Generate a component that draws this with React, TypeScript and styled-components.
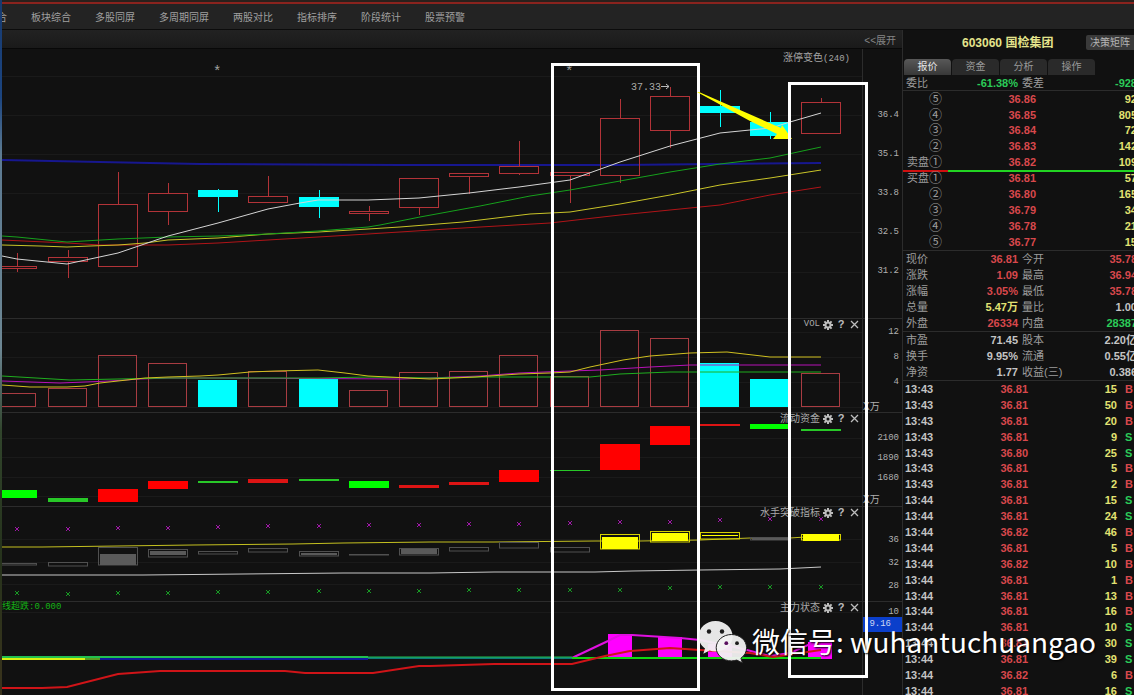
import React from 'react';
import styled, { createGlobalStyle, css } from 'styled-components';

const UI_FONT = '"Liberation Sans", "Noto Sans CJK SC", sans-serif';
const MONO_FONT = '"Liberation Mono", "Noto Sans CJK SC", monospace';

const tone = {
  up: '#d8484c',
  down: '#2bcb58',
  volume: '#e2e272',
  plain: '#c4c4c4',
  label: '#9c9c9c',
} as const;
type Tone = keyof typeof tone;

const GlobalStyle = createGlobalStyle`
  * { box-sizing: border-box; }
  body { margin: 0; background: #111; color: #aaa; font-family: ${UI_FONT}; font-size: 11px; }
  button { font: inherit; color: inherit; border: 0; background: none; padding: 0; }
  a { color: inherit; text-decoration: none; }
`;

const Shell = styled.div`
  display: grid;
  grid-template-columns: 2px minmax(0, 1fr);
  height: 100vh;
  overflow: hidden;
`;

const DesktopEdge = styled.div`
  background: linear-gradient(#173a70 0%, #1c4580 14%, #5c7a92 22%, #6d8794 50%, #31452c 62%, #26331c 80%, #3a331c 100%);
`;

const Terminal = styled.div`
  display: flex;
  flex-direction: column;
  min-width: 0;
  overflow: hidden;
`;

const TopNav = styled.nav`
  flex: none;
  height: 30px;
  background: #232323;
  border-top: 2px solid #2a201c;
  border-bottom: 1px solid #0c0c0c;
`;

const AlertStripe = styled.div`
  height: 2px;
  background: #8a231e;
`;

const NavList = styled.ul`
  display: flex;
  gap: 24px;
  margin: 0 0 0 -5px;
  padding: 0;
  list-style: none;
  font-size: 10px;
  line-height: 27px;
  white-space: nowrap;
  color: #a0a0a0;
`;

const Workspace = styled.div`
  flex: 1;
  display: grid;
  grid-template-columns: minmax(0, 1fr) 232px;
  min-height: 0;
`;

const ChartColumn = styled.main`
  position: relative;
  min-width: 0;
`;

const SubBar = styled.div`
  display: flex;
  justify-content: flex-end;
  align-items: center;
  height: 19px;
  padding-right: 6px;
  background: linear-gradient(#222, #1a1a1a);
  border-bottom: 1px solid #080808;
  color: #858585;
  font-size: 10px;
`;

const Pane = styled.section<{ $height: number }>`
  display: grid;
  grid-template-columns: minmax(0, 1fr) 40px;
  grid-template-rows: minmax(0, 1fr);
  height: ${(p) => p.$height}px;
  border-bottom: 1px solid #2c2c2c;
  &:last-of-type { border-bottom: 0; }
`;

const Plot = styled.div`
  position: relative;
  min-width: 0;
  svg.plot { display: block; width: 100%; height: 100%; }
`;

const PaneTitle = styled.header`
  position: absolute;
  top: 0;
  right: 3px;
  display: flex;
  align-items: center;
  height: 11px;
  gap: 3px;
  font-size: 10px;
  line-height: 11px;
  color: #aaa;
  white-space: nowrap;
`;

const TitleText = styled.span<{ $latin?: boolean }>`
  ${(p) => p.$latin && css`
    font-family: ${MONO_FONT};
    font-size: 9px;
  `}
`;

const PaneCaption = styled.div`
  position: absolute;
  top: 3px;
  right: 12px;
  font-size: 10px;
  line-height: 11px;
  color: #a4a4a4;
  span { font-family: ${MONO_FONT}; font-size: 9px; }
`;

const ToolButton = styled.button`
  display: grid;
  place-items: center;
  width: 10px;
  height: 11px;
  color: #bdbdbd;
  font-size: 11px;
  font-weight: bold;
  line-height: 11px;
`;

const Axis = styled.div<{ $pad?: number; $step: number }>`
  border-left: 1px solid #2c2c2c;
  padding: ${(p) => p.$pad ?? 0}px 3px 0 0;
  text-align: right;
  font-family: ${MONO_FONT};
  font-size: 9px;
  line-height: ${(p) => p.$step}px;
  color: #b0b0b0;
`;

const AxisUnit = styled.div`
  padding-right: 20px;
  font-family: ${UI_FONT};
  font-size: 10px;
  line-height: 24px;
  white-space: nowrap;
`;

const AxisCursor = styled.div`
  margin-right: -3px;
  height: 15px;
  padding-right: 11px;
  background: #0b3fcb;
  color: #cdd8f4;
  line-height: 15px;
`;

const SignalLabel = styled.div`
  position: absolute;
  top: 0;
  left: 0;
  font-family: ${MONO_FONT};
  font-size: 9px;
  line-height: 11px;
  color: #14b414;
`;

const Frame = styled.div<{ $x: number; $y: number; $w: number; $h: number }>`
  position: absolute;
  left: ${(p) => p.$x}px;
  top: ${(p) => p.$y}px;
  width: ${(p) => p.$w}px;
  height: ${(p) => p.$h}px;
  border: 3px solid #fff;
`;

const ArrowMark = styled.svg`
  position: absolute;
  left: 693px;
  top: 60px;
`;

const Watermark = styled.div`
  position: absolute;
  left: 695px;
  top: 589px;
  z-index: 2;
  display: flex;
  align-items: flex-start;
  gap: 3px;
  white-space: nowrap;
  font-family: "Noto Sans CJK SC", sans-serif;
  font-size: 28px;
  line-height: 44px;
  color: #fff;
  text-shadow: 1px 1px 2px #000;
`;

const QuotePanel = styled.aside`
  border-left: 1px solid #2c2c2c;
  overflow: hidden;
`;

const QuoteHead = styled.div`
  display: flex;
  align-items: center;
  justify-content: space-between;
  height: 29px;
  padding: 0 0 4px 59px;
  h1 {
    margin: 0;
    font-size: 12px;
    line-height: 16px;
    color: #e4e48c;
    white-space: nowrap;
  }
`;

const MatrixButton = styled.button`
  width: 48px;
  height: 15px;
  border-radius: 2px 0 0 2px;
  background: #3a3a3a;
  color: #b4b4b4;
  font-size: 10px;
  line-height: 15px;
  white-space: nowrap;
`;

const Tabs = styled.div`
  display: flex;
  gap: 1px;
  padding-left: 1px;
`;

const Tab = styled.button<{ $active?: boolean }>`
  width: 47px;
  height: 16px;
  border-radius: 4px 4px 0 0;
  font-size: 10px;
  line-height: 16px;
  background: #2a2a2a;
  color: #9a9a9a;
  ${(p) => p.$active && css`
    background: linear-gradient(#585858, #383838);
    color: #e8e8e8;
  `}
`;

const Quotes = styled.table<{ $height: number; $ruled?: boolean }>`
  width: 234px;
  height: ${(p) => p.$height}px;
  table-layout: fixed;
  border-collapse: separate;
  border-spacing: 0;
  border-bottom: ${(p) => (p.$ruled ? '1px solid #2c2c2c' : '0')};
  line-height: 12px;
  white-space: nowrap;
`;

const Value = styled.td<{ $tone: Tone }>`
  padding: 0;
  text-align: right;
  font-weight: bold;
  color: ${(p) => tone[p.$tone]};
`;

const Label = styled.th<{ $inset?: number }>`
  padding: 0 0 0 ${(p) => p.$inset ?? 3}px;
  text-align: left;
  font-weight: normal;
  color: ${tone.label};
`;

const Level = styled(Label)`
  padding: 0;
  text-align: right;
  span { font-size: 13px; }
`;

const Time = styled(Value)`
  padding-left: 2px;
  text-align: left;
`;

const Side = styled(Value)`
  padding-left: 8px;
  text-align: left;
`;

const Balance = styled.div`
  height: 2px;
  margin: 0 0 -2px;
  background: linear-gradient(90deg, #d01010 45px, #22d422 45px);
`;

/* ---------- chart data ---------- */

const STEP = 50.2;
const centre = (i: number) => Math.round(17.3 + i * STEP);
const barLeft = (i: number) => centre(i) - 20;

type Candle = [top: number, bottom: number, high: number, low: number, falling?: boolean];
const candles: Candle[] = [
  [266, 269, 253, 272], [257, 262, 250, 278], [204, 267, 172, 267], [193, 212, 183, 225],
  [190, 197, 189, 212, true], [196, 203, 176, 203], [197, 207, 190, 218, true], [211, 214, 206, 221],
  [178, 208, 178, 215], [173, 177, 173, 194], [166, 174, 141, 175], [172, 176, 172, 203],
  [118, 176, 99, 183], [96, 131, 87, 148], [106, 113, 90, 127, true], [122, 136, 112, 139, true],
  [102, 134, 98, 134],
];

const volumes = [393, 388, 355, 363, 380, 371, 379, 390, 372, 371, 355, 376, 330, 338, 363, 379, 373];

const funds: [number, number, boolean][] = [
  [490, 498, false], [498, 502, false], [489, 502, true], [481, 489, true], [481, 483, false],
  [479, 483, true], [479, 481, false], [481, 488, false], [485, 488, true], [482, 485, true],
  [470, 482, true], [470, 471, false], [444, 470, true], [426, 445, true], [424, 426, true],
  [424, 429, false], [429, 431, false],
];

const upperMarks = [529, 529, 528, 528, 527, 526, 526, 525, 525, 524, 524, 523, 522, 522, 520, 519, 519];
const lowerMarks = [594, 595, 594, 594, 593, 593, 592, 592, 592, 591, 591, 591, 591, 589, 588, 588, 588];

type Breakout = { box: [number, number]; fill?: [number, number]; hot?: boolean };
const breakouts: Breakout[] = [
  { box: [563, 565] }, { box: [562, 566] }, { box: [547, 565], fill: [554, 565] },
  { box: [549, 557], fill: [551, 555] }, { box: [551, 554] }, { box: [548, 552] },
  { box: [551, 556], fill: [553, 555] }, { box: [554, 555] }, { box: [548, 555], fill: [549, 554] },
  { box: [547, 551] }, { box: [542, 548] }, { box: [547, 552] },
  { box: [534, 549], fill: [537, 549], hot: true }, { box: [531, 542], fill: [533, 541], hot: true },
  { box: [532, 539], fill: [535, 536], hot: true }, { box: [537, 540], fill: [538, 540] },
  { box: [534, 540], fill: [534, 541], hot: true },
];

const Line = ({ pts, color, width = 1 }: { pts: string; color: string; width?: number }) => (
  <polyline points={pts} fill="none" stroke={color} strokeWidth={width} />
);

const Grid = ({ rows }: { rows: number[] }) => (
  <g fill="#1a1a1a">
    {rows.map((y) => <rect key={y} x={2} y={y} width={860} height={1} />)}
  </g>
);

const PlotSvg = ({ top, height, label, children }: { top: number; height: number; label: string; children: React.ReactNode }) => (
  <svg className="plot" role="img" aria-label={label} viewBox={`2 ${top} 860 ${height}`} preserveAspectRatio="none">
    {children}
  </svg>
);

const GearIcon = () => (
  <svg width="10" height="10" viewBox="0 0 10 10" aria-hidden="true">
    <g stroke="currentColor" strokeWidth="2">
      <path d="M5 0v10M0 5h10M1.4 1.4l7.2 7.2M8.6 1.4L1.4 8.6" />
    </g>
    <circle cx="5" cy="5" r="3.5" fill="currentColor" />
    <circle cx="5" cy="5" r="1.5" fill="#111" />
  </svg>
);

const CloseIcon = () => (
  <svg width="9" height="9" viewBox="0 0 9 9" aria-hidden="true">
    <path d="M1 1l7 7M8 1L1 8" stroke="currentColor" strokeWidth="1.3" />
  </svg>
);

const PaneTools = ({ name, latin }: { name: string; latin?: boolean }) => (
  <PaneTitle>
    <TitleText $latin={latin}>{name}</TitleText>
    <ToolButton aria-label={`${name} 设置`}><GearIcon /></ToolButton>
    <ToolButton aria-label={`${name} 帮助`}>?</ToolButton>
    <ToolButton aria-label={`${name} 关闭`}><CloseIcon /></ToolButton>
  </PaneTitle>
);

const PricePane = () => (
  <Pane $height={270}>
    <Plot>
      <PlotSvg top={49} height={269} label="K线">
        <Grid rows={[76, 115, 154, 193, 232, 272]} />
        <Line color="#17178f" width={2} pts="2,160 100,162 200,164 400,165 620,165 821,163" />
        {candles.map(([top, bottom, high, low, falling], i) => {
          const x = centre(i);
          const color = falling ? '#00ffff' : '#b23338';
          return (
            <g key={i} fill="none" stroke={color}>
              <path d={`M${x + 0.5} ${high}V${top}M${x + 0.5} ${bottom}V${low}`} />
              <rect x={barLeft(i) + 0.5} y={top + 0.5} width={39} height={bottom - top - 1} fill={falling ? color : 'none'} />
            </g>
          );
        })}
        <Line color="#b01418" pts="2,240 67,243 100,245 168,245 218,243 268,240 318,237 368,234 463,228 550,223 620,215 670,210 720,205 770,195 821,187" />
        <Line color="#c9c428" pts="2,245 40,246 67,247 90,246 118,245 145,243 168,240 218,238 268,234 318,232 368,229 400,227 463,222 530,214 570,212 620,204 670,195 720,185 770,178 821,170" />
        <Line color="#16a01c" pts="2,236 17,237 67,242 118,239 168,237 218,236 268,234 318,231 368,227 380,225 420,217 480,206 530,196 570,190 620,181 670,172 720,164 770,158 821,147" />
        <Line color="#d4d4d4" pts="2,256 17,259 67,264 118,253 168,236 218,223 268,209 300,203 318,200 368,200 419,198 469,193 519,187 570,180 620,162 670,146 720,133 750,130 771,128 790,122 821,113" />
        <g fill="#a4a4a4" fontFamily="Liberation Mono" fontSize="14">
          <text x="213" y="76">*</text>
          <text x="565" y="76">*</text>
        </g>
        <text x="631" y="90" fill="#aaa" fontFamily="Liberation Mono" fontSize="10">37.33</text>
        <path d="M661 86.5h8M666 84l3 2.5l-3 2.5" fill="none" stroke="#bbb" />
      </PlotSvg>
      <PaneCaption>涨停变色<span>(240)</span></PaneCaption>
    </Plot>
    <Axis $pad={47} $step={39}>
      {['36.4', '35.1', '33.8', '32.5', '31.2'].map((v) => <div key={v}>{v}</div>)}
    </Axis>
  </Pane>
);

const VolumePane = () => (
  <Pane $height={94}>
    <Plot>
      <PlotSvg top={319} height={93} label="成交量">
        <Grid rows={[332, 357, 382, 407]} />
        {volumes.map((top, i) => {
          const falling = candles[i][4];
          return (
            <rect key={i} x={barLeft(i) + 0.5} y={top + 0.5} width={38} height={406 - top}
              fill={falling ? '#00ffff' : 'none'} stroke={falling ? '#00ffff' : '#a83c42'} />
          );
        })}
        <Line color="#b712b7" pts="2,381 60,383 110,381 140,379 168,378 218,378 400,379 430,378 480,376 519,373 570,371 600,370 650,367 690,365 821,365" />
        <Line color="#1fae1f" pts="2,376 70,380 118,379 168,378 318,378 368,377 430,378 480,377 590,377 620,374 670,372 821,372" />
        <Line color="#d0c020" pts="2,385 30,387 67,387 85,386 100,383 118,381 145,378 168,377 200,376 218,375 250,372 275,371 318,370 345,373 368,376 430,379 475,377 519,374 550,373 570,372 590,367 623,360 650,356 690,353 727,352 770,357 821,357" />
      </PlotSvg>
      <PaneTools name="VOL" latin />
    </Plot>
    <Axis $pad={1} $step={25}>
      <div>12</div><div>8</div><div>4</div>
      <AxisUnit>X万</AxisUnit>
    </Axis>
  </Pane>
);

const FundPane = () => (
  <Pane $height={94}>
    <Plot>
      <PlotSvg top={413} height={93} label="流动资金">
        <Grid rows={[438, 457, 477, 496]} />
        {funds.map(([top, bottom, rising], i) => (
          <rect key={i} x={barLeft(i)} y={top} width={40} height={bottom - top}
            fill={bottom - top < 5 ? (rising ? '#dd1414' : '#28c828') : rising ? '#ff0000' : '#00ff00'} />
        ))}
      </PlotSvg>
      <PaneTools name="流动资金" />
    </Plot>
    <Axis $pad={15} $step={20}>
      <div>2100</div><div>1890</div><div>1680</div>
      <AxisUnit>X万</AxisUnit>
    </Axis>
  </Pane>
);

const cross = (x: number, y: number) => `M${x - 2} ${y - 2}l4 4m0 -4l-4 4`;

const BreakoutPane = () => (
  <Pane $height={95}>
    <Plot>
      <PlotSvg top={507} height={94} label="水手突破指标">
        <Grid rows={[539, 562, 584]} />
        <path d={upperMarks.map((y, i) => cross(centre(i), y)).join('')} stroke="#a018a8" fill="none" />
        <path d={lowerMarks.map((y, i) => cross(centre(i), y - 1)).join('')} stroke="#189a24" fill="none" />
        <Line color="#c4c020" pts="2,547 42,547 193,545 293,544 343,543 430,542 494,542 595,541 640,541 700,540 750,538 790,538 821,536" />
        {breakouts.map(({ box, fill, hot }, i) => (
          <g key={i}>
            <rect x={barLeft(i) + 0.5} y={box[0] + 0.5} width={39} height={box[1] - box[0] - 0.5}
              fill="none" stroke={hot ? '#d6d200' : '#505050'} />
            {fill && <rect x={barLeft(i) + 2} y={fill[0]} width={36} height={fill[1] - fill[0]} fill={hot ? '#ffff00' : '#5a5a5a'} />}
          </g>
        ))}
        <Line color="#c8c8c8" pts="2,575 143,575 243,574 343,573 430,573 494,572 595,572 632,571 700,570 780,569 821,567" />
      </PlotSvg>
      <PaneTools name="水手突破指标" />
    </Plot>
    <Axis $pad={22} $step={23}>
      <div>36</div><div>32</div><div>28</div>
    </Axis>
  </Pane>
);

const StatePane = () => (
  <Pane $height={93}>
    <Plot>
      <PlotSvg top={602} height={93} label="主力状态">
        <Grid rows={[612]} />
        <g fill="#ff00ff">
          <rect x={608} y={634} width={24} height={24} />
          <rect x={658} y={637} width={24} height={21} />
          <rect x={708} y={644} width={24} height={14} />
          <rect x={808} y={642} width={24} height={17} />
        </g>
        <Line color="#e010e0" width={2} pts="572,658 608,641 620,635 632,635 680,638 700,640 730,646 747,650 770,656 790,653 808,645 821,643" />
        <Line color="#10189c" width={2} pts="100,659 368,659" />
        <Line color="#0c7a78" width={2} pts="368,658 572,658" />
        <Line color="#22c050" width={2} pts="2,657 368,657" />
        <Line color="#22c050" width={1} pts="368,657 572,657" />
        <Line color="#d8f010" width={2} pts="2,659 85,659" />
        <Line color="#5a9a20" width={2} pts="85,659 100,659" />
        <Line color="#0fd80f" width={2} pts="572,658 821,658" />
        <Line color="#d01418" width={2} pts="2,688 42,688 67,687 118,674 160,671 285,671 305,673 373,673 419,666 430,666 494,664 572,664 605,656 630,651 670,648 700,650 750,653 773,657 807,652 821,650" />
      </PlotSvg>
      <SignalLabel>线超跌:0.000</SignalLabel>
      <PaneTools name="主力状态" />
    </Plot>
    <Axis $pad={5} $step={10}>
      <div>10</div>
      <AxisCursor>9.16</AxisCursor>
    </Axis>
  </Pane>
);

const WeChatIcon = () => (
  <svg width="52" height="46" viewBox="696 619 52 46" aria-hidden="true">
    <g fill="#f2f2f2" fillOpacity="0.95">
      <path d="M714.500 621c-9.500 0-16.800 6.900-16.800 15.600 0 5 2.400 9 6.300 11.900l-1.700 5.200 6.200-3.100c1.900.5 3.800.9 6 .9 9.500 0 17.200-6.700 17.200-14.900 0-8.700-7.700-15.600-17.200-15.600z" />
      <path stroke="#222" strokeWidth="1" d="M730.500 634.500c-8.500 0-15.300 6-15.300 13.200s6.800 13.200 15.300 13.200c1.900 0 3.700-.4 5.300-.8l5.600 2.800-1.500-4.700c3.600-2.500 5.700-6.200 5.700-10.500 0-7.200-6.600-13.200-15.100-13.200z" />
    </g>
    <g fill="#1c1c1c">
      <circle cx="708" cy="631.500" r="2.200" />
      <circle cx="721" cy="631.500" r="2.200" />
      <circle cx="725.300" cy="643.200" r="1.900" fill="#5a1060" />
      <circle cx="736" cy="643.200" r="1.900" />
    </g>
  </svg>
);

/* ---------- quote data ---------- */

const asks: [string, string, string][] = [
  ['⑤', '36.86', '92'], ['④', '36.85', '805'], ['③', '36.84', '72'], ['②', '36.83', '142'], ['①', '36.82', '109'],
];
const bids: [string, string, string][] = [
  ['①', '36.81', '57'], ['②', '36.80', '165'], ['③', '36.79', '34'], ['④', '36.78', '21'], ['⑤', '36.77', '15'],
];

type StatRow = [string, string, Tone, string, string, Tone];
const ratio: StatRow[] = [['委比', '-61.38%', 'down', '委差', '-928', 'down']];
const dayStats: StatRow[] = [
  ['现价', '36.81', 'up', '今开', '35.78', 'up'],
  ['涨跌', '1.09', 'up', '最高', '36.94', 'up'],
  ['涨幅', '3.05%', 'up', '最低', '35.78', 'up'],
  ['总量', '5.47万', 'volume', '量比', '1.00', 'plain'],
  ['外盘', '26334', 'up', '内盘', '28387', 'down'],
];
const baseStats: StatRow[] = [
  ['市盈', '71.45', 'plain', '股本', '2.20亿', 'plain'],
  ['换手', '9.95%', 'plain', '流通', '0.55亿', 'plain'],
  ['净资', '1.77', 'plain', '收益(三)', '0.386', 'plain'],
];
const ticks: [string, string, string, 'B' | 'S'][] = [
  ['13:43', '36.81', '15', 'B'], ['13:43', '36.81', '50', 'B'], ['13:43', '36.81', '20', 'B'],
  ['13:43', '36.81', '9', 'S'], ['13:43', '36.80', '25', 'S'], ['13:43', '36.81', '5', 'B'],
  ['13:43', '36.81', '2', 'B'], ['13:44', '36.81', '15', 'S'], ['13:44', '36.81', '24', 'S'],
  ['13:44', '36.82', '46', 'B'], ['13:44', '36.81', '5', 'B'], ['13:44', '36.82', '10', 'B'],
  ['13:44', '36.81', '1', 'B'], ['13:44', '36.81', '13', 'B'], ['13:44', '36.81', '16', 'B'],
  ['13:44', '36.81', '10', 'S'], ['13:44', '36.81', '30', 'S'], ['13:44', '36.81', '39', 'S'],
  ['13:44', '36.82', '6', 'B'], ['13:44', '36.81', '16', 'S'],
];

const BookTable = ({ rows, name, namedRow, height, ruled }: { rows: [string, string, string][]; name: string; namedRow: number; height: number; ruled?: boolean }) => (
  <Quotes $height={height} $ruled={ruled} aria-label={name}>
    <colgroup><col width={39} /><col width={94} /><col width={101} /></colgroup>
    <tbody>
      {rows.map(([level, price, volume], i) => (
        <tr key={level}>
          <Level scope="row">{i === namedRow && name}<span>{level}</span></Level>
          <Value $tone="up">{price}</Value>
          <Value $tone="volume">{volume}</Value>
        </tr>
      ))}
    </tbody>
  </Quotes>
);

const StatTable = ({ rows, height, ruled, label }: { rows: StatRow[]; height: number; ruled?: boolean; label: string }) => (
  <Quotes $height={height} $ruled={ruled} aria-label={label}>
    <colgroup><col width={40} /><col width={75} /><col width={50} /><col width={69} /></colgroup>
    <tbody>
      {rows.map(([nameA, a, toneA, nameB, b, toneB]) => (
        <tr key={nameA}>
          <Label scope="row">{nameA}</Label>
          <Value $tone={toneA}>{a}</Value>
          <Label $inset={4}>{nameB}</Label>
          <Value $tone={toneB}>{b}</Value>
        </tr>
      ))}
    </tbody>
  </Quotes>
);

const NAV = ['合', '板块综合', '多股同屏', '多周期同屏', '两股对比', '指标排序', '阶段统计', '股票预警'];

export default function App() {
  return (
    <>
      <GlobalStyle />
      <Shell>
        <DesktopEdge />
        <Terminal>
          <TopNav>
            <AlertStripe />
            <NavList>
              {NAV.map((item) => <li key={item}><a href="#">{item}</a></li>)}
            </NavList>
          </TopNav>
          <Workspace>
            <ChartColumn>
              <SubBar><button>&lt;&lt;展开</button></SubBar>
              <PricePane />
              <VolumePane />
              <FundPane />
              <BreakoutPane />
              <StatePane />
              <Frame $x={549} $y={33} $w={149} $h={628} />
              <ArrowMark width="100" height="52" viewBox="695 90 100 52" aria-hidden="true">
                <path d="M697 92L699 92L781 128L782 125L792 139L773 139L777 134L750 121Z" fill="#ffff00" />
              </ArrowMark>
              <Frame $x={786} $y={52} $w={80} $h={596} />
              <Watermark>
                <WeChatIcon />
                <span>微信号: wuhantuchuangao</span>
              </Watermark>
            </ChartColumn>
            <QuotePanel>
              <QuoteHead>
                <h1>603060 国检集团</h1>
                <MatrixButton>决策矩阵</MatrixButton>
              </QuoteHead>
              <Tabs role="tablist">
                {['报价', '资金', '分析', '操作'].map((t, i) => (
                  <Tab key={t} role="tab" aria-selected={i === 0} $active={i === 0}>{t}</Tab>
                ))}
              </Tabs>
              <StatTable rows={ratio} height={16} ruled label="委比" />
              <BookTable rows={asks} name="卖盘" namedRow={4} height={79} />
              <Balance />
              <BookTable rows={bids} name="买盘" namedRow={0} height={81} ruled />
              <StatTable rows={dayStats} height={81} ruled label="行情" />
              <StatTable rows={baseStats} height={49} ruled label="基本面" />
              <Quotes $height={318} aria-label="成交明细">
                <colgroup><col width={50} /><col width={75} /><col width={89} /><col width={20} /></colgroup>
                <tbody>
                  {ticks.map(([time, price, volume, side], i) => (
                    <tr key={i}>
                      <Time $tone="plain">{time}</Time>
                      <Value $tone="up">{price}</Value>
                      <Value $tone="volume">{volume}</Value>
                      <Side $tone={side === 'B' ? 'up' : 'down'}>{side}</Side>
                    </tr>
                  ))}
                </tbody>
              </Quotes>
            </QuotePanel>
          </Workspace>
        </Terminal>
      </Shell>
    </>
  );
}
